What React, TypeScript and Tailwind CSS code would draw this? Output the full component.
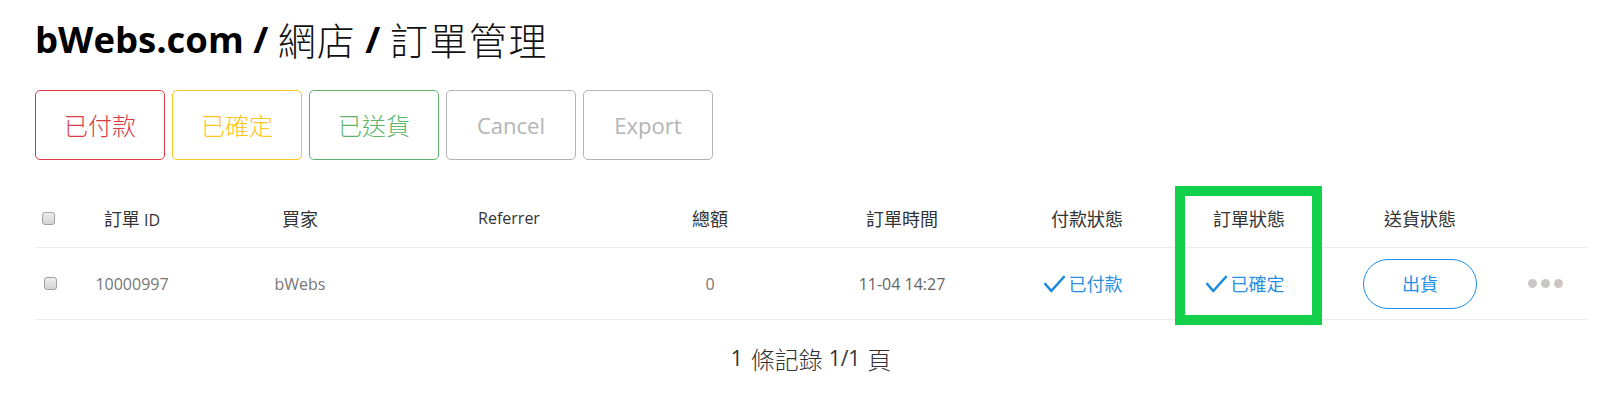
const zh = "font-['Noto_Sans_CJK_TC',sans-serif] font-normal text-[1.125em]"

const cols = "grid grid-cols-[30px_134px_202px_216px_186px_198px_172px_152px_190px_72px] items-center text-center"

function Checkbox() {
    return <span className="inline-block w-[13px] h-[13px] rounded-[3px] border border-[#a0a0a0] bg-gradient-to-b from-[#eeeeee] to-[#d4d4d4]" />
}

function Check() {
    return (
        <svg width="21" height="18" viewBox="0 0 21 18" className="mr-[4px]">
            <path d="M1.3 9 L7.3 16 L19.8 2" fill="none" stroke="#1a8be0" strokeWidth="2.6" strokeLinecap="round" strokeLinejoin="round" />
        </svg>
    )
}

function ActionButton({ label, color, cjk }: { label: string, color: string, cjk?: boolean }) {
    return (
        <button className={`w-[130px] h-[70px] rounded-[5px] border bg-white flex items-center justify-center text-[22px] ${color}`}>
            {cjk ? <span className="font-['Noto_Sans_CJK_TC',sans-serif] text-[24px] font-light">{label}</span> : label}
        </button>
    )
}

export default function App() {
    return (
        <div className="w-[1597px] h-[400px] bg-white pl-[35px] pr-[10px] font-['Open_Sans','Noto_Sans_CJK_TC',sans-serif] overflow-hidden">
            <h1 className="mt-[21px] h-[36px] leading-[36px] text-[36.5px] font-bold text-black whitespace-nowrap flex items-center">
                <span>bWebs.com /&nbsp;</span>
                <span className="font-['Noto_Sans_CJK_TC',sans-serif] font-light text-[#111] text-[38px] tracking-[1px]">網店</span>
                <span>&nbsp;/&nbsp;</span>
                <span className="font-['Noto_Sans_CJK_TC',sans-serif] font-light text-[#111] text-[38px] tracking-[1.5px]">訂單管理</span>
            </h1>

            <div className="mt-[33px] flex gap-[7px]">
                <ActionButton label="已付款" color="border-[#dc3a45] text-[#dc3a45]" cjk />
                <ActionButton label="已確定" color="border-[#ffc520] text-[#ffc520]" cjk />
                <ActionButton label="已送貨" color="border-[#5cb56a] text-[#5cb56a]" cjk />
                <ActionButton label="Cancel" color="border-[#b4b4b4] text-[#b4b4b4]" />
                <ActionButton label="Export" color="border-[#b4b4b4] text-[#b4b4b4]" />
            </div>

            <div className="relative mt-[29px] text-[16px]">
                <div className={`${cols} h-[59px] border-b border-[#ececec] text-[#333]`}>
                    <div className="flex justify-start pl-[7px]"><Checkbox /></div>
                    <div><span className={zh}>訂單</span> ID</div>
                    <div className={zh}>買家</div>
                    <div>Referrer</div>
                    <div className={zh}>總額</div>
                    <div className={zh}>訂單時間</div>
                    <div className={zh}>付款狀態</div>
                    <div className={zh}>訂單狀態</div>
                    <div className={zh}>送貨狀態</div>
                    <div />
                </div>
                <div className={`${cols} h-[72px] border-b border-[#ececec] text-[#777]`}>
                    <div className="flex justify-start pl-[9px]"><Checkbox /></div>
                    <div>10000997</div>
                    <div>bWebs</div>
                    <div />
                    <div>0</div>
                    <div className="text-[#666]">11-04 14:27</div>
                    <div className="flex items-center justify-center pr-[8px] text-[#2a90e0]"><Check /><span className={zh}>已付款</span></div>
                    <div className="flex items-center justify-center pr-[8px] text-[#2a90e0]"><Check /><span className={zh}>已確定</span></div>
                    <div className="flex justify-center">
                        <button className="w-[114px] h-[50px] rounded-full border border-[#1e8fe6] text-[#1e8fe6] bg-white">
                            <span className={zh}>出貨</span>
                        </button>
                    </div>
                    <div className="flex items-center justify-start gap-[4px] pl-[13px]">
                        <span className="w-[9px] h-[9px] rounded-full bg-[#cbc7c7]" />
                        <span className="w-[9px] h-[9px] rounded-full bg-[#cbc7c7]" />
                        <span className="w-[9px] h-[9px] rounded-full bg-[#cbc7c7]" />
                    </div>
                </div>
                <div className="absolute left-[1140px] top-[-3px] w-[147px] h-[139px] border-[10px] border-[#12d04a]" />

                <div className="h-[78px] flex items-center justify-center text-[21px] text-[#333]">
                    <span>1</span>
                    <span className="ml-[8px] font-['Noto_Sans_CJK_TC',sans-serif] text-[24px] font-light">條記錄</span>
                    <span className="ml-[6px]">1/1</span>
                    <span className="ml-[7px] font-['Noto_Sans_CJK_TC',sans-serif] text-[24px] font-light">頁</span>
                </div>
            </div>
        </div>
    )
}
